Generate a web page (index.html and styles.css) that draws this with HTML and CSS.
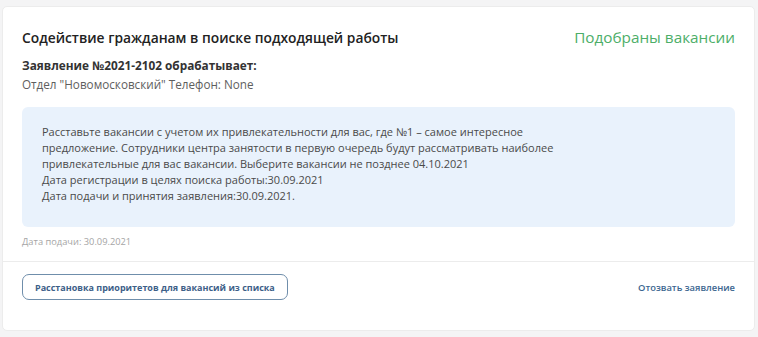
FILE: index.html
```html
<!DOCTYPE html>
<html lang="ru">
<head>
  <meta charset="UTF-8">
  <title>Заявление</title>
  <link rel="stylesheet" href="styles.css">
</head>
<body>
  <div class="card">
    <div class="card-body">
      <div class="head">
        <h2 class="title">Содействие гражданам в поиске подходящей работы</h2>
        <span class="status">Подобраны вакансии</span>
      </div>
      <p class="number">Заявление №2021-2102 обрабатывает:</p>
      <p class="dept">Отдел "Новомосковский" Телефон: None</p>

      <div class="info">
        <p>Расставьте вакансии с учетом их привлекательности для вас, где №1 – самое интересное<br>
        предложение. Сотрудники центра занятости в первую очередь будут рассматривать наиболее<br>
        привлекательные для вас вакансии. Выберите вакансии не позднее 04.10.2021</p>
        <p>Дата регистрации в целях поиска работы:30.09.2021</p>
        <p>Дата подачи и принятия заявления:30.09.2021.</p>
      </div>

      <p class="date">Дата подачи: 30.09.2021</p>
    </div>

    <div class="card-footer">
      <button class="btn">Расстановка приоритетов для вакансий из списка</button>
      <a class="revoke" href="#">Отозвать заявление</a>
    </div>
  </div>
</body>
</html>
```

FILE: styles.css
```css
* {
  margin: 0;
  padding: 0;
  box-sizing: border-box;
  font-family: "Open Sans", "Noto Sans", sans-serif;
}

body {
  background-color: #f4f4f5;
  padding: 6px 3px 6px 2px;
}

.card {
  background-color: #ffffff;
  border: 1px solid #ececec;
  border-radius: 5px;
  height: 325px;
}

.card-body {
  padding: 18px 19px 0 19px;
}

.head {
  display: flex;
  justify-content: space-between;
  align-items: center;
  height: 24px;
}

.title {
  font-size: 13.8px;
  font-weight: 600;
  color: #222;
}

.status {
  font-size: 15.3px;
  color: #4cae68;
}

.number {
  margin-top: 8px;
  font-size: 11.8px;
  font-weight: 700;
  color: #333;
}

.dept {
  margin-top: 3px;
  font-size: 11.7px;
  color: #5e5e5e;
}

.info {
  margin-top: 15px;
  background-color: #e9f2fc;
  border-radius: 6px;
  padding: 17px 20px 23px 20px;
  font-size: 11px;
  line-height: 16px;
  color: #4a4a4a;
}

.date {
  margin-top: 8px;
  font-size: 9.3px;
  color: #a5a5a5;
}

.card-footer {
  margin-top: 13px;
  border-top: 1px solid #ececec;
  padding: 12px 19px;
  display: flex;
  justify-content: space-between;
  align-items: center;
}

.btn {
  background: #fff;
  border: 1px solid #6f8eab;
  border-radius: 7px;
  padding: 0 12px;
  height: 26px;
  font-size: 9px;
  font-weight: 700;
  color: #3d6088;
  cursor: pointer;
}

.revoke {
  font-size: 9.4px;
  font-weight: 600;
  color: #3b6690;
  text-decoration: none;
}
```
